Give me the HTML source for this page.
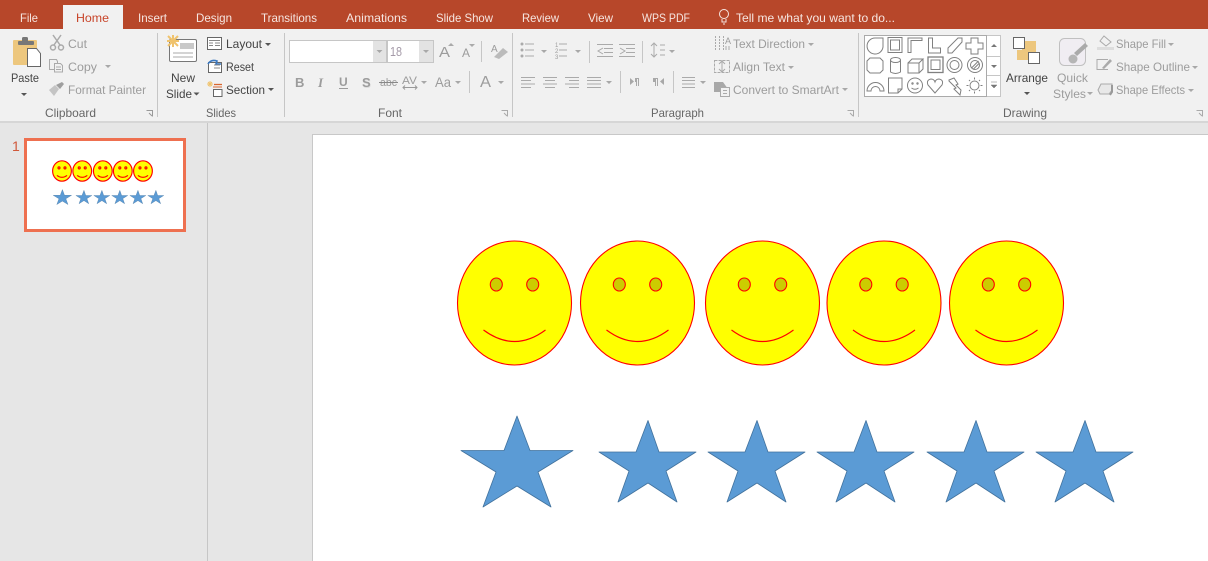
<!DOCTYPE html>
<html lang="en"><head><meta charset="utf-8"><title>PowerPoint</title>
<style>
html,body{margin:0;padding:0;width:1208px;height:561px;overflow:hidden;background:#e6e6e6}
svg{display:block}
text{font-family:"Liberation Sans",sans-serif;font-size:12px;fill:#9c9c9c}
.t{fill:#f6e6e1}
.k{fill:#444}
.g{fill:#666}
</style></head><body>
<svg width="1208" height="561" viewBox="0 0 1208 561" xmlns="http://www.w3.org/2000/svg">
<defs>
<path id="d" d="M0 0h6l-3 3z" fill="#a8a8a8"/>
<path id="dk" d="M0 0h6l-3 3z" fill="#555"/>
<g id="smile" fill="#ffff00" stroke="#ff0000">
<ellipse cx="0" cy="0" rx="57" ry="62"/>
<ellipse cx="-18.2" cy="-18.5" rx="6" ry="6.5" fill="#cccc00"/>
<ellipse cx="18.2" cy="-18.5" rx="6" ry="6.5" fill="#cccc00"/>
<path d="M-31 27Q0 50 31 27" fill="none"/>
</g>
<path id="big" d="M517 416L530 450.5H573L538 472L551 507L517 486L483 507L496 472L461 450.5H504Z" fill="#5b9bd5" stroke="#41719c" stroke-linejoin="round"/>
<path id="small" d="M648 420.5L659 452H696L666 471L677 502L648 483L618 502L629 471L599 452H636Z" fill="#5b9bd5" stroke="#41719c" stroke-linejoin="round"/>
<g id="smiles">
<use href="#smile" x="514.500" y="303"/><use href="#smile" x="637.500" y="303"/><use href="#smile" x="762.500" y="303"/><use href="#smile" x="884" y="303"/><use href="#smile" x="1006.500" y="303"/>
</g>
<g id="stars">
<use href="#big"/><use href="#small"/><use href="#small" x="109"/><use href="#small" x="218"/><use href="#small" x="328"/><use href="#small" x="437"/>
</g>
</defs>

<rect width="1208" height="561" fill="#e6e6e6"/>
<!-- title tabs -->
<rect width="1208" height="29" fill="#b7472a"/>
<rect x="63" y="5" width="60" height="24" fill="#f1f1f1"/>
<text class="t" x="20" y="22" textLength="18" lengthAdjust="spacingAndGlyphs">File</text>
<text x="76" y="22" textLength="33" lengthAdjust="spacingAndGlyphs" style="fill:#c8452a">Home</text>
<text class="t" x="138" y="22" textLength="29" lengthAdjust="spacingAndGlyphs">Insert</text>
<text class="t" x="196" y="22" textLength="36" lengthAdjust="spacingAndGlyphs">Design</text>
<text class="t" x="261" y="22" textLength="56" lengthAdjust="spacingAndGlyphs">Transitions</text>
<text class="t" x="346" y="22" textLength="61" lengthAdjust="spacingAndGlyphs">Animations</text>
<text class="t" x="436" y="22" textLength="57" lengthAdjust="spacingAndGlyphs">Slide Show</text>
<text class="t" x="522" y="22" textLength="37" lengthAdjust="spacingAndGlyphs">Review</text>
<text class="t" x="588" y="22" textLength="25" lengthAdjust="spacingAndGlyphs">View</text>
<text class="t" x="642" y="22" textLength="48" lengthAdjust="spacingAndGlyphs">WPS PDF</text>
<text class="t" x="736" y="22" textLength="159" lengthAdjust="spacingAndGlyphs">Tell me what you want to do...</text>
<g fill="none" stroke="#f6e6e1"><circle cx="724" cy="14" r="4.500"/><path d="M722 19v3h4v-3M723 24h2"/></g>

<!-- ribbon -->
<rect y="29" width="1208" height="92" fill="#f1f1f1"/>
<rect y="121" width="1208" height="2" fill="#d6d6d6"/>
<g fill="#c6c6c6"><rect x="157" y="33" width="1" height="84"/><rect x="284" y="33" width="1" height="84"/><rect x="512" y="33" width="1" height="84"/><rect x="858" y="33" width="1" height="84"/></g>

<!-- clipboard group -->
<rect x="13" y="40" width="24" height="25" rx="1" fill="#edc77e"/>
<rect x="18" y="41" width="16" height="4" rx="1" fill="#777"/><rect x="22" y="37" width="6" height="5" rx="1.500" fill="#777"/>
<path d="M27.500 48.500h9l4 5v13h-13z" fill="#fff" stroke="#666"/>
<text class="k" x="11" y="82" textLength="28" lengthAdjust="spacingAndGlyphs">Paste</text>
<use href="#dk" x="21" y="93"/>
<g fill="none" stroke="#aaa" stroke-width="1.500"><path d="M53 35l7 10M61 35l-7 10"/><circle cx="53" cy="47.500" r="2.500"/><circle cx="61" cy="47.500" r="2.500"/></g>
<text x="68" y="48" textLength="19" lengthAdjust="spacingAndGlyphs">Cut</text>
<g fill="#f1f1f1" stroke="#aaa"><path d="M49.500 59.500h7l1 2v8h-8z"/><path d="M54.500 63.500h6l2 2v6.500h-8z"/><path d="M56 67h5M56 69.500h5" fill="none"/></g>
<text x="68" y="71" textLength="29" lengthAdjust="spacingAndGlyphs">Copy</text>
<use href="#d" x="105" y="65"/>
<path d="M49 90l6-5 4 4-5 7z" fill="#c4c4c4"/><path d="M56 85l6-3 2 2-4 5z" fill="#9e9e9e"/>
<text x="68" y="94" textLength="78" lengthAdjust="spacingAndGlyphs">Format Painter</text>
<text class="g" x="45" y="117" textLength="51" lengthAdjust="spacingAndGlyphs">Clipboard</text>
<path d="M146.500 110.500h6v6M149 113l3 3" fill="none" stroke="#999"/>

<!-- slides group -->
<rect x="169.500" y="39.500" width="27" height="22" rx="1.500" fill="#fff" stroke="#777"/>
<rect x="180" y="43" width="14" height="6" fill="#c9c9c9"/>
<path d="M173 53h20M173 57h20" stroke="#aaa"/>
<path d="M168 36l10 10M178 36l-10 10M173 35v12M167 41h12" stroke="#f0c36d" stroke-width="2"/>
<text class="k" x="171" y="82" textLength="24" lengthAdjust="spacingAndGlyphs">New</text>
<text class="k" x="166" y="98" textLength="26" lengthAdjust="spacingAndGlyphs">Slide</text>
<use href="#dk" x="193.500" y="92.500"/>
<rect x="207.500" y="37.500" width="14" height="12" fill="#fff" stroke="#666"/><path d="M209 40.500h11M209 43h4M209 45.500h4M215 43h5M215 45.500h5" stroke="#888"/>
<text class="k" x="226" y="48" textLength="36" lengthAdjust="spacingAndGlyphs">Layout</text><use href="#dk" x="265" y="43"/>
<rect x="208.500" y="62.500" width="13" height="10" fill="#fff" stroke="#666"/><path d="M208 64q3-5 9-3l-1 3h5" fill="none" stroke="#3a78c0" stroke-width="1.600"/><path d="M214 65h6M214 68h6" stroke="#888"/>
<text class="k" x="226" y="71" textLength="28" lengthAdjust="spacingAndGlyphs">Reset</text>
<path d="M207 84h6M210 81v6M208 82l4 4M212 82l-4 4" stroke="#f0c36d"/><path d="M214 84.500h8" stroke="#d9662e" stroke-width="1.300"/><rect x="213.500" y="89.500" width="8.500" height="7" fill="#fff" stroke="#666"/><path d="M213 87h9" stroke="#d9662e"/>
<text class="k" x="226" y="94" textLength="39" lengthAdjust="spacingAndGlyphs">Section</text><use href="#dk" x="268" y="88"/>
<text class="g" x="206" y="117" textLength="30" lengthAdjust="spacingAndGlyphs">Slides</text>

<!-- font group -->
<rect x="289.500" y="40.500" width="97" height="22" fill="#fff" stroke="#c6c6c6"/>
<rect x="373" y="41" width="13" height="21" fill="#e3e3e3"/>
<rect x="387.500" y="40.500" width="46" height="22" fill="#fff" stroke="#c6c6c6"/>
<rect x="419" y="41" width="14" height="21" fill="#e3e3e3"/>
<use href="#d" x="376.500" y="50"/><use href="#d" x="423" y="50"/>
<text x="390" y="56" textLength="12" lengthAdjust="spacingAndGlyphs" style="fill:#a49aa8;font-size:13px">18</text>
<text x="439" y="57" style="font-size:15px" textLength="11" lengthAdjust="spacingAndGlyphs">A</text><path d="M448 46h6l-3-3z" fill="#aaa"/>
<text x="462" y="57" style="font-size:12px" textLength="8" lengthAdjust="spacingAndGlyphs">A</text><path d="M469 44h6l-3 3z" fill="#aaa"/>
<path d="M481.500 41v21" stroke="#c6c6c6"/>
<text x="491" y="52" style="font-size:10px">A</text><path d="M494 57l9-9 5 4-9 7z" fill="#bbb"/>
<text x="295" y="87" style="font-weight:bold;font-size:13px">B</text>
<text x="318" y="87" style="font-style:italic;font-weight:bold;font-family:'Liberation Serif',serif;font-size:13px">I</text>
<text x="339" y="86" style="font-weight:bold;font-size:12px">U</text><path d="M339 88.500h9" stroke="#9c9c9c"/>
<text x="362.500" y="88" style="font-weight:bold;font-size:13px;fill:#ddd">S</text>
<text x="362" y="87" style="font-weight:bold;font-size:13px;fill:#9c9c9c">S</text>
<text x="380" y="86" style="font-size:11px" textLength="17" lengthAdjust="spacingAndGlyphs">abc</text><path d="M379 82.500h19" stroke="#888"/>
<text x="402" y="84" style="font-size:11px" textLength="15" lengthAdjust="spacingAndGlyphs">AV</text><path d="M403 87.500h14M405 85.500l-2 2 2 2M415 85.500l2 2-2 2" fill="none" stroke="#999"/>
<use href="#d" x="421" y="81"/>
<text x="435" y="87" style="font-size:14px" textLength="16" lengthAdjust="spacingAndGlyphs">Aa</text><use href="#d" x="455" y="81"/>
<path d="M469.500 71v22" stroke="#c6c6c6"/>
<text x="480" y="87" style="font-size:16px" textLength="11" lengthAdjust="spacingAndGlyphs">A</text><use href="#d" x="498" y="81"/>
<text class="g" x="378" y="117" textLength="24" lengthAdjust="spacingAndGlyphs">Font</text>
<path d="M501.500 110.500h6v6M504 113l3 3" fill="none" stroke="#aaa"/>

<!-- paragraph group -->
<g fill="#aaa" stroke="#aaa">
<path d="M525 44h9M525 50h9M525 56h9M559 44h8M559 50h8M559 56h8" fill="none"/>
<circle cx="522" cy="44" r="1"/><circle cx="522" cy="50" r="1"/><circle cx="522" cy="56" r="1"/>
</g>
<text x="555" y="47" style="font-size:6px">1</text><text x="555" y="53" style="font-size:6px">2</text><text x="555" y="59" style="font-size:6px">3</text>
<use href="#d" x="541" y="50"/><use href="#d" x="575" y="50"/>
<path d="M589.500 41v22M642.500 41v22M620.500 71v22M673.500 71v22" stroke="#c6c6c6"/>
<g fill="none" stroke="#aaa">
<path d="M597 44.500h16M604 48.500h9M604 52.500h9M597 56.500h16M603 48l-5 3 5 3"/>
<path d="M619 44.500h16M626 48.500h9M626 52.500h9M619 56.500h16M620 48l5 3-5 3"/>
<path d="M657 46l-3-3-3 3M654 44v13M651 54l3 3 3-3M660 45h5M660 50h5M660 55h5"/>
<path d="M521 77.500h14M521 80.500h10M521 84h14M521 87.500h10"/>
<path d="M543 77.500h14M545 80.500h10M543 84h14M545 87.500h10"/>
<path d="M565 77.500h14M569 80.500h10M565 84h14M569 87.500h10"/>
<path d="M587 77.500h14M587 80.500h14M587 84h14M587 87.500h14"/>
<path d="M682 77.500h13M682 80.500h13M682 84h13M682 87.500h13"/>
</g>
<use href="#d" x="669" y="50"/><use href="#d" x="606" y="81"/><use href="#d" x="700" y="81"/>
<g fill="#a8a8a8"><path d="M630 78v7l4-3.500z"/><path d="M635 78h4v8h-1v-7h-1v7h-1v-4h-1z"/><path d="M664 78v7l-4-3.500z"/><path d="M653 78h5v8h-1v-7h-1v7h-1v-4h-2z"/></g>
<text class="g" x="651" y="117" textLength="53" lengthAdjust="spacingAndGlyphs">Paragraph</text>
<path d="M847.500 110.500h6v6M850 113l3 3" fill="none" stroke="#aaa"/>
<path d="M715.500 36v14M719.500 36v14M723.500 36v14" stroke="#aaa" stroke-dasharray="2 1"/>
<text x="725" y="44" style="font-size:9px">A</text><path d="M726 46v4M729 46v4" stroke="#aaa"/>
<text x="733" y="48" textLength="72" lengthAdjust="spacingAndGlyphs">Text Direction</text><use href="#d" x="808" y="43"/>
<rect x="714.500" y="60.500" width="15" height="12" fill="none" stroke="#aaa" stroke-dasharray="3 1"/><path d="M722 61v11M719 64l3-3 3 3M719 69l3 3 3-3" fill="none" stroke="#aaa"/>
<text x="733" y="71" textLength="52" lengthAdjust="spacingAndGlyphs">Align Text</text><use href="#d" x="788" y="66"/>
<path d="M714 82h9l5 7h-6v3h-8z" fill="#a8a8a8"/><rect x="720.500" y="87.500" width="9" height="9" fill="#f1f1f1" stroke="#aaa"/><path d="M723 90.500h4M723 93.500h4" stroke="#aaa"/>
<text x="733" y="94" textLength="106" lengthAdjust="spacingAndGlyphs">Convert to SmartArt</text><use href="#d" x="842" y="88"/>

<!-- gallery -->
<rect x="864.500" y="35.500" width="136" height="61" fill="#fff" stroke="#c6c6c6"/>
<rect x="864.500" y="35.500" width="122" height="61" fill="#fff" stroke="#aaa"/>
<path d="M987 56.500h14M987 75.500h14" stroke="#c6c6c6"/>
<path d="M991 47h6l-3-3zM991 65h6l-3 3z" fill="#777"/><path d="M991 82h6M991 85h6l-3 3z" fill="#777" stroke="#777" stroke-width=".5"/>
<g fill="none" stroke="#808080" stroke-width="1">
<path d="M883 38v9a8 8 0 1 1 -8-9z"/>
<rect x="888" y="37.500" width="14" height="15"/><rect x="890.500" y="40" width="9" height="10"/>
<path d="M908 38h14v2.500h-11v12h-3z"/>
<path d="M928.500 38h4v10h8v5h-12z"/>
<path d="M948 48l10-10h4v4l-10 11h-4z"/>
<path d="M971 38h7v5h5v6h-5v5h-7v-5h-5v-6h5z"/>
<path d="M870 58h10l3 3v9l-3 3h-10l-3-3v-9z"/>
<ellipse cx="895.500" cy="60" rx="5" ry="2.500"/><path d="M890.500 60v12q5 3 10 0v-12"/>
<path d="M908 63h11v10h-11zM908 63l4-4h11l-4 4M923 59v10l-4 4"/>
<rect x="928" y="57" width="15" height="15.500" stroke-width="1.300"/><rect x="931" y="60" width="9" height="9.500"/>
<circle cx="954.500" cy="65" r="7.500"/><circle cx="954.500" cy="65" r="4.500"/>
<circle cx="975" cy="65" r="7.500"/><circle cx="975" cy="65" r="4.500"/><path d="M971.500 68l7-7M973 69.500l6.500-6.500"/>
<path d="M867 91a8.500 8.500 0 0 1 17 0h-4a4.500 4.500 0 0 0-9 0z"/>
<path d="M888.500 78h13.500v11l-4 4h-9.500zM898 93v-4h4"/>
<circle cx="915" cy="85.500" r="7.500"/><circle cx="912.500" cy="83.500" r=".7"/><circle cx="917.500" cy="83.500" r=".7"/><path d="M911.500 88q3.500 2.500 7 0"/>
<path d="M935 93l-7-8q-2-5 3-6 3 0 4 3 1-3 4-3 5 1 3 6z"/>
<path d="M949 80l5-2 4 6-2 1 5 5-1 5-6-6 2-1-7-7z"/>
<circle cx="974.500" cy="85.500" r="4.500"/><path d="M974.500 77.500v2M974.500 91.500v2M966.500 85.500h2M980.500 85.500h2M969 80l1 1M979 90l1 1M980 80l-1 1M970 90l-1 1"/>
</g>

<!-- drawing -->
<rect x="1022" y="41" width="14" height="19" fill="#edc77e"/><rect x="1017" y="50" width="10" height="10" fill="#edc77e"/>
<rect x="1013.500" y="37.500" width="11" height="11" fill="#fff" stroke="#666"/>
<rect x="1028.500" y="52.500" width="11" height="11" fill="#fff" stroke="#666"/>
<text class="k" x="1006" y="82" textLength="42" lengthAdjust="spacingAndGlyphs">Arrange</text><use href="#dk" x="1024" y="92"/>
<rect x="1059.500" y="38.500" width="26" height="27" rx="5" fill="#f0edf2" stroke="#c0c0c0"/>
<path d="M1088 46l-11 10-3-3 11-10z" fill="#aaa"/><circle cx="1073" cy="59" r="4.500" fill="#b5b5b5"/>
<text x="1057" y="82" textLength="31" lengthAdjust="spacingAndGlyphs">Quick</text>
<text x="1053" y="98" textLength="33" lengthAdjust="spacingAndGlyphs">Styles</text><use href="#d" x="1087" y="92"/>
<path d="M1097 47h17v3h-17z" fill="#ddd"/><path d="M1104 36l7 6-5 4-6-5z" fill="#f1f1f1" stroke="#aaa"/>
<text x="1116" y="48" textLength="50" lengthAdjust="spacingAndGlyphs">Shape Fill</text><use href="#d" x="1168" y="43"/>
<path d="M1108 59.500h-11v10h11" fill="none" stroke="#aaa"/><path d="M1102 68l8-9 2 2-8 8z" fill="#aaa"/>
<text x="1116" y="71" textLength="74" lengthAdjust="spacingAndGlyphs">Shape Outline</text><use href="#d" x="1192" y="66"/>
<path d="M1098 90l3-6h11v6l-3 4h-9z" fill="#e8e8e8" stroke="#aaa"/><path d="M1112 85v7l-2 3" stroke="#999" fill="none" stroke-width="2"/>
<text x="1116" y="94" textLength="69" lengthAdjust="spacingAndGlyphs">Shape Effects</text><use href="#d" x="1188" y="89"/>
<text class="g" x="1003" y="117" textLength="44" lengthAdjust="spacingAndGlyphs">Drawing</text>
<path d="M1196.500 110.500h6v6M1199 113l3 3" fill="none" stroke="#aaa"/>

<!-- panes -->
<rect x="207" y="123" width="1" height="438" fill="#c6c6c6"/>
<text x="12" y="151" style="font-size:14px;fill:#d0583a">1</text>
<rect x="25.500" y="139.500" width="159" height="91" fill="#fff" stroke="#ee7050" stroke-width="3"/>
<g transform="translate(-22.700 121.100) scale(.1646)"><g stroke-width="7"><use href="#smiles"/></g><g stroke-width="2"><use href="#stars"/></g></g>

<rect x="312.500" y="134.500" width="900" height="430" fill="#fff" stroke="#c8c8c8"/>
<g stroke-width="1.100"><use href="#smiles"/></g><g stroke-width=".8"><use href="#stars"/></g>
</svg>
</body></html>
